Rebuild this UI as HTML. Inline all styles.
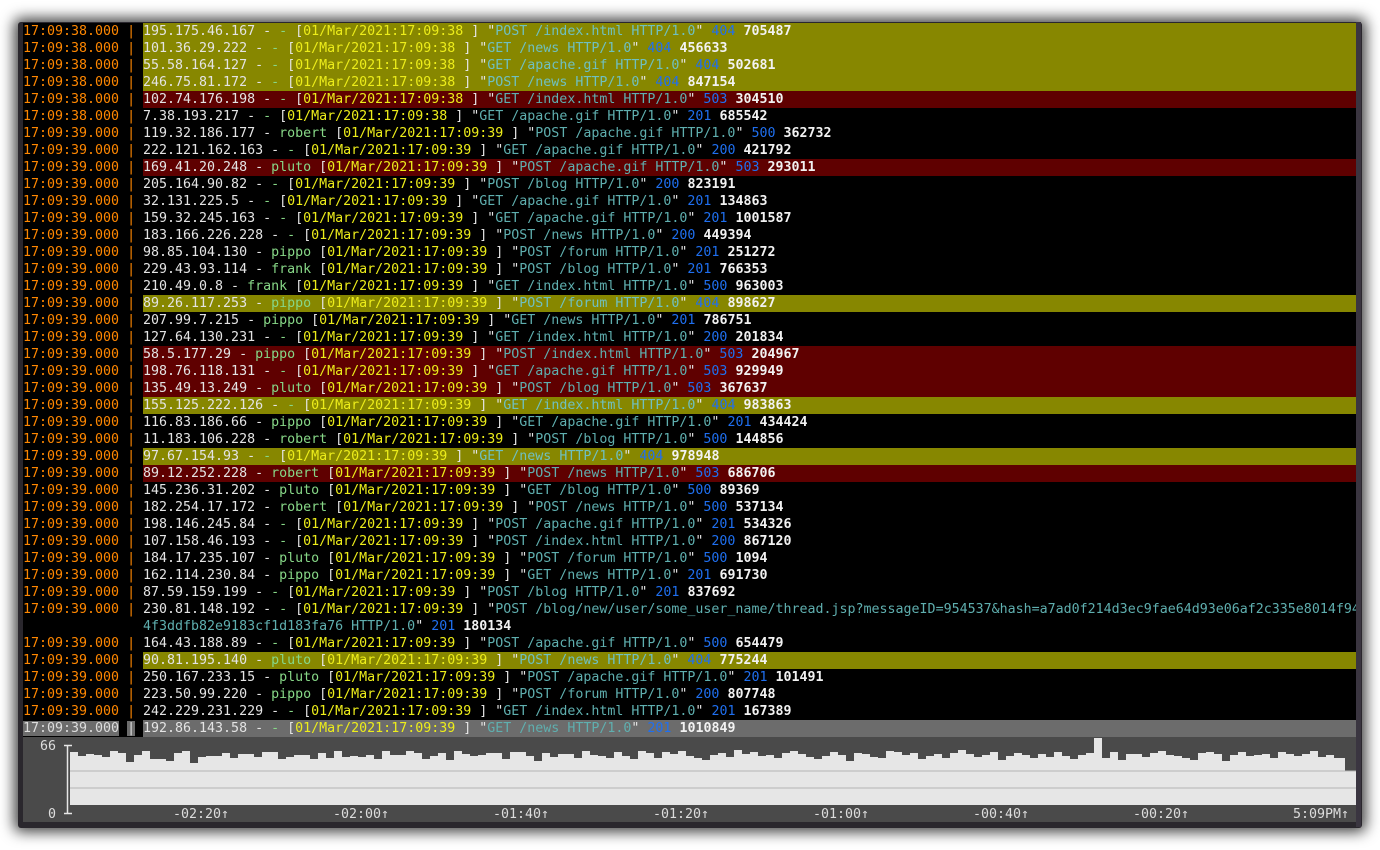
<!DOCTYPE html>
<html><head><meta charset="utf-8"><style>
html,body{margin:0;padding:0;background:#fff;width:1380px;height:850px;overflow:hidden}
#win{position:absolute;left:18px;top:22px;width:1344px;height:806px;background:#2a272d;box-shadow:0 0 14px 4px rgba(0,0,0,.75);border-radius:3px}
#term{position:absolute;left:23px;top:23px;width:1333px;height:714px;background:#000;font-family:"DejaVu Sans Mono","Liberation Mono",monospace;font-size:13.3px;color:#e4e4e4;overflow:hidden}
.r{height:17px;line-height:17px;white-space:pre;display:flex}
.p{width:120px;flex:none}
.m{flex:1}
.y .m{background:#878700}
.x .m{background:#5f0000}
.s .m{background:#6c6c6c}
.t{color:#ff8700}
.g{color:#87d787}
.d{color:#eded1a}
.c{color:#5fafaf}
.y .c{color:#6fc0c0}
.b{color:#1f6fef}
.w{color:#f2f2f2;font-weight:bold}
#chart{position:absolute;left:23px;top:737px;width:1333px;height:85px;background:#4a4a4a;font-family:"DejaVu Sans Mono","Liberation Mono",monospace;font-size:13.3px;color:#ddd}
#sb{position:absolute;left:1356px;top:22px;width:5px;height:805px;background:#3a3540}
.lb{position:absolute;top:69px;line-height:17px;white-space:pre}
</style></head><body>
<div id="win"></div><div id="sb"></div>
<div id="term">
<div class="r y"><span class="p t">17:09:38.000 | </span><span class="m">195.175.46.167 - <span class="g">-</span> [<span class="d">01/Mar/2021:17:09:38</span> ] "<span class="c">POST /index.html HTTP/1.0</span>" <span class="b">404</span> <span class="w">705487</span></span></div>
<div class="r y"><span class="p t">17:09:38.000 | </span><span class="m">101.36.29.222 - <span class="g">-</span> [<span class="d">01/Mar/2021:17:09:38</span> ] "<span class="c">GET /news HTTP/1.0</span>" <span class="b">404</span> <span class="w">456633</span></span></div>
<div class="r y"><span class="p t">17:09:38.000 | </span><span class="m">55.58.164.127 - <span class="g">-</span> [<span class="d">01/Mar/2021:17:09:38</span> ] "<span class="c">GET /apache.gif HTTP/1.0</span>" <span class="b">404</span> <span class="w">502681</span></span></div>
<div class="r y"><span class="p t">17:09:38.000 | </span><span class="m">246.75.81.172 - <span class="g">-</span> [<span class="d">01/Mar/2021:17:09:38</span> ] "<span class="c">POST /news HTTP/1.0</span>" <span class="b">404</span> <span class="w">847154</span></span></div>
<div class="r x"><span class="p t">17:09:38.000 | </span><span class="m">102.74.176.198 - <span class="g">-</span> [<span class="d">01/Mar/2021:17:09:38</span> ] "<span class="c">GET /index.html HTTP/1.0</span>" <span class="b">503</span> <span class="w">304510</span></span></div>
<div class="r"><span class="p t">17:09:38.000 | </span><span class="m">7.38.193.217 - <span class="g">-</span> [<span class="d">01/Mar/2021:17:09:38</span> ] "<span class="c">GET /apache.gif HTTP/1.0</span>" <span class="b">201</span> <span class="w">685542</span></span></div>
<div class="r"><span class="p t">17:09:39.000 | </span><span class="m">119.32.186.177 - <span class="g">robert</span> [<span class="d">01/Mar/2021:17:09:39</span> ] "<span class="c">POST /apache.gif HTTP/1.0</span>" <span class="b">500</span> <span class="w">362732</span></span></div>
<div class="r"><span class="p t">17:09:39.000 | </span><span class="m">222.121.162.163 - <span class="g">-</span> [<span class="d">01/Mar/2021:17:09:39</span> ] "<span class="c">GET /apache.gif HTTP/1.0</span>" <span class="b">200</span> <span class="w">421792</span></span></div>
<div class="r x"><span class="p t">17:09:39.000 | </span><span class="m">169.41.20.248 - <span class="g">pluto</span> [<span class="d">01/Mar/2021:17:09:39</span> ] "<span class="c">POST /apache.gif HTTP/1.0</span>" <span class="b">503</span> <span class="w">293011</span></span></div>
<div class="r"><span class="p t">17:09:39.000 | </span><span class="m">205.164.90.82 - <span class="g">-</span> [<span class="d">01/Mar/2021:17:09:39</span> ] "<span class="c">POST /blog HTTP/1.0</span>" <span class="b">200</span> <span class="w">823191</span></span></div>
<div class="r"><span class="p t">17:09:39.000 | </span><span class="m">32.131.225.5 - <span class="g">-</span> [<span class="d">01/Mar/2021:17:09:39</span> ] "<span class="c">GET /apache.gif HTTP/1.0</span>" <span class="b">201</span> <span class="w">134863</span></span></div>
<div class="r"><span class="p t">17:09:39.000 | </span><span class="m">159.32.245.163 - <span class="g">-</span> [<span class="d">01/Mar/2021:17:09:39</span> ] "<span class="c">GET /apache.gif HTTP/1.0</span>" <span class="b">201</span> <span class="w">1001587</span></span></div>
<div class="r"><span class="p t">17:09:39.000 | </span><span class="m">183.166.226.228 - <span class="g">-</span> [<span class="d">01/Mar/2021:17:09:39</span> ] "<span class="c">POST /news HTTP/1.0</span>" <span class="b">200</span> <span class="w">449394</span></span></div>
<div class="r"><span class="p t">17:09:39.000 | </span><span class="m">98.85.104.130 - <span class="g">pippo</span> [<span class="d">01/Mar/2021:17:09:39</span> ] "<span class="c">POST /forum HTTP/1.0</span>" <span class="b">201</span> <span class="w">251272</span></span></div>
<div class="r"><span class="p t">17:09:39.000 | </span><span class="m">229.43.93.114 - <span class="g">frank</span> [<span class="d">01/Mar/2021:17:09:39</span> ] "<span class="c">POST /blog HTTP/1.0</span>" <span class="b">201</span> <span class="w">766353</span></span></div>
<div class="r"><span class="p t">17:09:39.000 | </span><span class="m">210.49.0.8 - <span class="g">frank</span> [<span class="d">01/Mar/2021:17:09:39</span> ] "<span class="c">GET /index.html HTTP/1.0</span>" <span class="b">500</span> <span class="w">963003</span></span></div>
<div class="r y"><span class="p t">17:09:39.000 | </span><span class="m">89.26.117.253 - <span class="g">pippo</span> [<span class="d">01/Mar/2021:17:09:39</span> ] "<span class="c">POST /forum HTTP/1.0</span>" <span class="b">404</span> <span class="w">898627</span></span></div>
<div class="r"><span class="p t">17:09:39.000 | </span><span class="m">207.99.7.215 - <span class="g">pippo</span> [<span class="d">01/Mar/2021:17:09:39</span> ] "<span class="c">GET /news HTTP/1.0</span>" <span class="b">201</span> <span class="w">786751</span></span></div>
<div class="r"><span class="p t">17:09:39.000 | </span><span class="m">127.64.130.231 - <span class="g">-</span> [<span class="d">01/Mar/2021:17:09:39</span> ] "<span class="c">GET /index.html HTTP/1.0</span>" <span class="b">200</span> <span class="w">201834</span></span></div>
<div class="r x"><span class="p t">17:09:39.000 | </span><span class="m">58.5.177.29 - <span class="g">pippo</span> [<span class="d">01/Mar/2021:17:09:39</span> ] "<span class="c">POST /index.html HTTP/1.0</span>" <span class="b">503</span> <span class="w">204967</span></span></div>
<div class="r x"><span class="p t">17:09:39.000 | </span><span class="m">198.76.118.131 - <span class="g">-</span> [<span class="d">01/Mar/2021:17:09:39</span> ] "<span class="c">GET /apache.gif HTTP/1.0</span>" <span class="b">503</span> <span class="w">929949</span></span></div>
<div class="r x"><span class="p t">17:09:39.000 | </span><span class="m">135.49.13.249 - <span class="g">pluto</span> [<span class="d">01/Mar/2021:17:09:39</span> ] "<span class="c">POST /blog HTTP/1.0</span>" <span class="b">503</span> <span class="w">367637</span></span></div>
<div class="r y"><span class="p t">17:09:39.000 | </span><span class="m">155.125.222.126 - <span class="g">-</span> [<span class="d">01/Mar/2021:17:09:39</span> ] "<span class="c">GET /index.html HTTP/1.0</span>" <span class="b">404</span> <span class="w">983863</span></span></div>
<div class="r"><span class="p t">17:09:39.000 | </span><span class="m">116.83.186.66 - <span class="g">pippo</span> [<span class="d">01/Mar/2021:17:09:39</span> ] "<span class="c">GET /apache.gif HTTP/1.0</span>" <span class="b">201</span> <span class="w">434424</span></span></div>
<div class="r"><span class="p t">17:09:39.000 | </span><span class="m">11.183.106.228 - <span class="g">robert</span> [<span class="d">01/Mar/2021:17:09:39</span> ] "<span class="c">POST /blog HTTP/1.0</span>" <span class="b">500</span> <span class="w">144856</span></span></div>
<div class="r y"><span class="p t">17:09:39.000 | </span><span class="m">97.67.154.93 - <span class="g">-</span> [<span class="d">01/Mar/2021:17:09:39</span> ] "<span class="c">GET /news HTTP/1.0</span>" <span class="b">404</span> <span class="w">978948</span></span></div>
<div class="r x"><span class="p t">17:09:39.000 | </span><span class="m">89.12.252.228 - <span class="g">robert</span> [<span class="d">01/Mar/2021:17:09:39</span> ] "<span class="c">POST /news HTTP/1.0</span>" <span class="b">503</span> <span class="w">686706</span></span></div>
<div class="r"><span class="p t">17:09:39.000 | </span><span class="m">145.236.31.202 - <span class="g">pluto</span> [<span class="d">01/Mar/2021:17:09:39</span> ] "<span class="c">GET /blog HTTP/1.0</span>" <span class="b">500</span> <span class="w">89369</span></span></div>
<div class="r"><span class="p t">17:09:39.000 | </span><span class="m">182.254.17.172 - <span class="g">robert</span> [<span class="d">01/Mar/2021:17:09:39</span> ] "<span class="c">POST /news HTTP/1.0</span>" <span class="b">500</span> <span class="w">537134</span></span></div>
<div class="r"><span class="p t">17:09:39.000 | </span><span class="m">198.146.245.84 - <span class="g">-</span> [<span class="d">01/Mar/2021:17:09:39</span> ] "<span class="c">POST /apache.gif HTTP/1.0</span>" <span class="b">201</span> <span class="w">534326</span></span></div>
<div class="r"><span class="p t">17:09:39.000 | </span><span class="m">107.158.46.193 - <span class="g">-</span> [<span class="d">01/Mar/2021:17:09:39</span> ] "<span class="c">POST /index.html HTTP/1.0</span>" <span class="b">200</span> <span class="w">867120</span></span></div>
<div class="r"><span class="p t">17:09:39.000 | </span><span class="m">184.17.235.107 - <span class="g">pluto</span> [<span class="d">01/Mar/2021:17:09:39</span> ] "<span class="c">POST /forum HTTP/1.0</span>" <span class="b">500</span> <span class="w">1094</span></span></div>
<div class="r"><span class="p t">17:09:39.000 | </span><span class="m">162.114.230.84 - <span class="g">pippo</span> [<span class="d">01/Mar/2021:17:09:39</span> ] "<span class="c">GET /news HTTP/1.0</span>" <span class="b">201</span> <span class="w">691730</span></span></div>
<div class="r"><span class="p t">17:09:39.000 | </span><span class="m">87.59.159.199 - <span class="g">-</span> [<span class="d">01/Mar/2021:17:09:39</span> ] "<span class="c">POST /blog HTTP/1.0</span>" <span class="b">201</span> <span class="w">837692</span></span></div>
<div class="r"><span class="p t">17:09:39.000 | </span><span class="m">230.81.148.192 - <span class="g">-</span> [<span class="d">01/Mar/2021:17:09:39</span> ] "<span class="c">POST /blog/new/user/some_user_name/thread.jsp?messageID=954537&amp;hash=a7ad0f214d3ec9fae64d93e06af2c335e8014f94</span></span></div>
<div class="r"><span class="p"> </span><span class="m"><span class="c">4f3ddfb82e9183cf1d183fa76 HTTP/1.0</span>" <span class="b">201</span> <span class="w">180134</span></span></div>
<div class="r"><span class="p t">17:09:39.000 | </span><span class="m">164.43.188.89 - <span class="g">-</span> [<span class="d">01/Mar/2021:17:09:39</span> ] "<span class="c">POST /apache.gif HTTP/1.0</span>" <span class="b">500</span> <span class="w">654479</span></span></div>
<div class="r y"><span class="p t">17:09:39.000 | </span><span class="m">90.81.195.140 - <span class="g">pluto</span> [<span class="d">01/Mar/2021:17:09:39</span> ] "<span class="c">POST /news HTTP/1.0</span>" <span class="b">404</span> <span class="w">775244</span></span></div>
<div class="r"><span class="p t">17:09:39.000 | </span><span class="m">250.167.233.15 - <span class="g">pluto</span> [<span class="d">01/Mar/2021:17:09:39</span> ] "<span class="c">POST /apache.gif HTTP/1.0</span>" <span class="b">201</span> <span class="w">101491</span></span></div>
<div class="r"><span class="p t">17:09:39.000 | </span><span class="m">223.50.99.220 - <span class="g">pippo</span> [<span class="d">01/Mar/2021:17:09:39</span> ] "<span class="c">POST /forum HTTP/1.0</span>" <span class="b">200</span> <span class="w">807748</span></span></div>
<div class="r"><span class="p t">17:09:39.000 | </span><span class="m">242.229.231.229 - <span class="g">-</span> [<span class="d">01/Mar/2021:17:09:39</span> ] "<span class="c">GET /index.html HTTP/1.0</span>" <span class="b">201</span> <span class="w">167389</span></span></div>
<div class="r s"><span class="p"><span style="background:#6c6c6c;color:#ddd">17:09:39.000</span><span style="background:#000"> </span><span style="background:#6c6c6c;color:#ddd">|</span><span style="background:#000"> </span></span><span class="m">192.86.143.58 - <span class="g">-</span> [<span class="d">01/Mar/2021:17:09:39</span> ] "<span class="c">GET /news HTTP/1.0</span>" <span class="b">201</span> <span class="w">1010849</span></span></div>
</div>
<div id="chart">
<svg width="1333" height="85" style="position:absolute;left:0;top:0">
<path fill="#e6e6e6" d="M47 68V15H55V19H63V17H71V18H79V20H87V14H95V16H103V25H111V18H119V14H127V22H135V22H143V24H151V16H159V14H167V26H175V20H183V19H191V19H199V16H207V21H215V17H223V17H231V20H239V15H247V15H255V22H263V20H271V18H279V18H287V22H295V16H303V21H311V14H319V20H327V19H335V20H343V18H351V22H359V14H367V18H375V18H383V14H391V16H399V22H407V19H415V16H423V23H431V14H439V17H447V19H455V18H463V16H471V16H479V22H487V15H495V15H503V19H511V24H519V16H527V20H535V17H543V17H551V21H559V14H567V18H575V19H583V21H591V15H599V19H607V22H615V14H623V16H631V21H639V15H647V17H655V14H663V19H671V21H679V23H687V18H695V16H703V20H711V13H719V17H727V15H735V19H743V18H751V21H759V16H767V14H775V17H783V20H791V22H799V19H807V15H815V18H823V24H831V16H839V17H847V20H855V21H863V14H871V15H879V18H887V16H895V22H903V19H911V17H919V21H927V16H935V13H943V17H951V20H959V18H967V15H975V23H983V19H991V16H999V18H1007V21H1015V17H1023V20H1031V15H1039V19H1047V22H1055V18H1063V16H1071V1H1079V21H1087V15H1095V23H1103V17H1111V17H1119V20H1127V16H1135V14H1143V18H1151V19H1159V21H1167V23H1175V16H1183V15H1191V17H1199V24H1207V18H1215V15H1223V19H1231V18H1239V17H1247V21H1255V15H1263V17H1271V19H1279V17H1287V14H1295V20H1303V18H1311V21H1322V34H1333V68Z"/>
<line x1="47" y1="34" x2="1333" y2="34" stroke="#b4b4b4" stroke-width="1"/>
<line x1="47" y1="51" x2="1333" y2="51" stroke="#b4b4b4" stroke-width="1"/>
<path d="M41 8.5H49M44.5 8.5V76.5M41 76.5H49" stroke="#e6e6e6" stroke-width="1.5" fill="none"/>
</svg>
<div class="lb" style="left:17px;top:1px">66</div>
<div class="lb" style="left:25px">0</div>
<div class="lb" style="left:150px">-02:20↑</div>
<div class="lb" style="left:310px">-02:00↑</div>
<div class="lb" style="left:470px">-01:40↑</div>
<div class="lb" style="left:630px">-01:20↑</div>
<div class="lb" style="left:790px">-01:00↑</div>
<div class="lb" style="left:950px">-00:40↑</div>
<div class="lb" style="left:1110px">-00:20↑</div>
<div class="lb" style="left:1270px">5:09PM↑</div>
</div>
</body></html>
